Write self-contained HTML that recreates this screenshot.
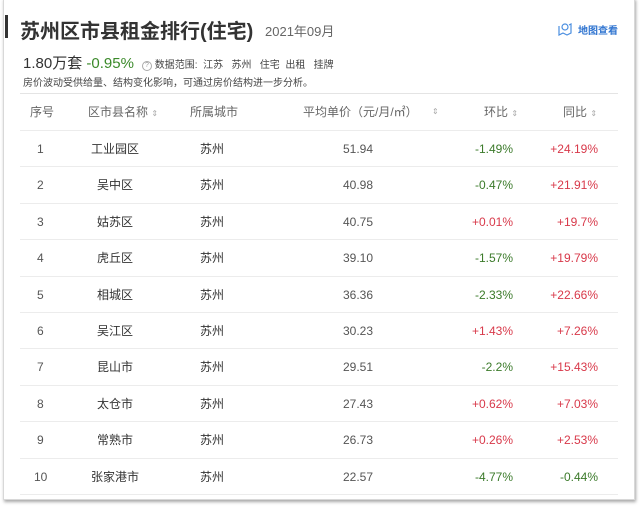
<!DOCTYPE html>
<html><head><meta charset="utf-8"><style>
*{margin:0;padding:0;box-sizing:border-box}
body{width:640px;height:508px;background:#fff;font-family:"Liberation Sans","Noto Sans CJK SC",sans-serif;position:relative;overflow:hidden;color:#333}
.card{position:absolute;left:3px;top:-2px;width:632px;height:502px;border:1px solid #d8d8d8;border-top:none;box-shadow:1px 2px 3px rgba(0,0,0,.35);background:#fff}
.a{position:absolute;white-space:nowrap}
.bar{position:absolute;left:5px;top:15px;width:3px;height:23px;background:#333}
.row{position:absolute;left:20px;width:598px;border-top:1px solid #ececec;height:36.4px}
.c{position:absolute;top:0;line-height:36px;font-size:12px;color:#555;white-space:nowrap}
.n{left:55px;width:80px;text-align:center;color:#333}
.ct{left:180px;color:#333}
.p{left:323px}
.q{right:105px}.y{right:20px}
.g{color:#3b7a2a}.r{color:#d8394a}
.h{font-size:12px;color:#666}
.s{font-size:8px;color:#aaa}
</style></head><body>
<div class="card"></div>
<div class="bar"></div>
<div class="a" style="left:20px;top:15px;font-size:20px;font-weight:bold;color:#333">苏州区市县租金排行(住宅)</div>
<div class="a" style="left:265px;top:21px;font-size:13px;color:#666">2021年09月</div>
<svg class="a" style="left:557px;top:21px" width="16" height="16" viewBox="0 0 16 16"><path d="M2 5v9l4-2 4 2 4-2V3l-2 1" fill="none" stroke="#4a8ee0" stroke-width="1.2"/><circle cx="8" cy="6" r="3" fill="none" stroke="#4a8ee0" stroke-width="1.2"/></svg>
<div class="a" style="left:578px;top:22px;font-size:10px;font-weight:bold;color:#2f74d0">地图查看</div>
<div class="a" style="left:23px;top:52px;font-size:15px;color:#333">1.80万套 <span style="color:#3b8a2a">-0.95%</span></div>
<div class="a" style="left:142px;top:56px;font-size:10px;color:#444"><span style="display:inline-block;width:10px;height:10px;border:1px solid #aaa;border-radius:50%;font-size:7px;line-height:8px;text-align:center;color:#999;vertical-align:1px">?</span> 数据范围:&nbsp; 江苏&nbsp;&nbsp; 苏州&nbsp;&nbsp; 住宅&nbsp; 出租&nbsp;&nbsp; 挂牌</div>
<div class="a" style="left:23px;top:74px;font-size:10px;color:#444">房价波动受供给量、结构变化影响，可通过房价结构进一步分析。</div>
<div class="row" style="top:93px;border-color:#e4e4e4">
<div class="c h" style="left:10px">序号</div>
<div class="c h" style="left:68px">区市县名称 <span class="s">⇕</span></div>
<div class="c h" style="left:170px">所属城市</div>
<div class="c h" style="left:283px">平均单价（元/月/㎡）</div>
<div class="c s" style="left:412px">⇕</div>
<div class="c h" style="left:464px">环比 <span class="s">⇕</span></div>
<div class="c h" style="left:543px">同比 <span class="s">⇕</span></div>
</div>
<div class="row" style="top:130px"><div class="c" style="left:17px">1</div><div class="c n">工业园区</div><div class="c ct">苏州</div><div class="c p">51.94</div><div class="c q g">-1.49%</div><div class="c y r">+24.19%</div></div>
<div class="row" style="top:166.4px"><div class="c" style="left:17px">2</div><div class="c n">吴中区</div><div class="c ct">苏州</div><div class="c p">40.98</div><div class="c q g">-0.47%</div><div class="c y r">+21.91%</div></div>
<div class="row" style="top:202.8px"><div class="c" style="left:17px">3</div><div class="c n">姑苏区</div><div class="c ct">苏州</div><div class="c p">40.75</div><div class="c q r">+0.01%</div><div class="c y r">+19.7%</div></div>
<div class="row" style="top:239.2px"><div class="c" style="left:17px">4</div><div class="c n">虎丘区</div><div class="c ct">苏州</div><div class="c p">39.10</div><div class="c q g">-1.57%</div><div class="c y r">+19.79%</div></div>
<div class="row" style="top:275.6px"><div class="c" style="left:17px">5</div><div class="c n">相城区</div><div class="c ct">苏州</div><div class="c p">36.36</div><div class="c q g">-2.33%</div><div class="c y r">+22.66%</div></div>
<div class="row" style="top:312px"><div class="c" style="left:17px">6</div><div class="c n">吴江区</div><div class="c ct">苏州</div><div class="c p">30.23</div><div class="c q r">+1.43%</div><div class="c y r">+7.26%</div></div>
<div class="row" style="top:348.4px"><div class="c" style="left:17px">7</div><div class="c n">昆山市</div><div class="c ct">苏州</div><div class="c p">29.51</div><div class="c q g">-2.2%</div><div class="c y r">+15.43%</div></div>
<div class="row" style="top:384.8px"><div class="c" style="left:17px">8</div><div class="c n">太仓市</div><div class="c ct">苏州</div><div class="c p">27.43</div><div class="c q r">+0.62%</div><div class="c y r">+7.03%</div></div>
<div class="row" style="top:421.2px"><div class="c" style="left:17px">9</div><div class="c n">常熟市</div><div class="c ct">苏州</div><div class="c p">26.73</div><div class="c q r">+0.26%</div><div class="c y r">+2.53%</div></div>
<div class="row" style="top:457.6px"><div class="c" style="left:14px">10</div><div class="c n">张家港市</div><div class="c ct">苏州</div><div class="c p">22.57</div><div class="c q g">-4.77%</div><div class="c y g">-0.44%</div></div>
<div class="row" style="top:494px;height:1px"></div>
</body></html>
